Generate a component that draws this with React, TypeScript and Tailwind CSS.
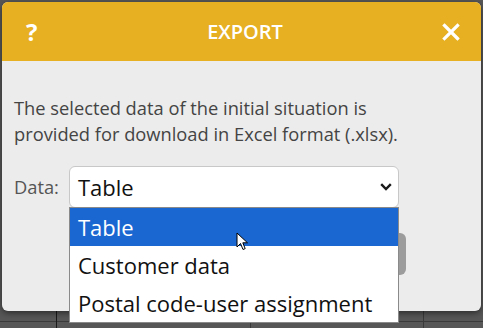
const options = ['Table', 'Customer data', 'Postal code-user assignment'];

export default function App() {
  return (
    <div
      className="relative w-[483px] h-[328px] overflow-hidden bg-[#575757] pt-[2px] pl-[2px]"
      style={{ fontFamily: '"Open Sans", "Noto Sans", sans-serif' }}
    >
      {/* background spreadsheet lines */}
      <div className="absolute left-0 right-0 top-[321px] h-px bg-[#3a3a3a]" />
      <div className="absolute top-[310px] bottom-0 left-[56px] w-px bg-[#1a1a1a]" />
      <div className="absolute top-[310px] bottom-0 left-[250px] w-px bg-[#3a3a3a]" />
      <div className="absolute top-[310px] bottom-0 left-[423px] w-px bg-[#3a3a3a]" />

      <div className="relative w-[479px] h-[309px] rounded-[6px] bg-[#ececec] shadow-[0_2px_6px_rgba(0,0,0,0.5)]">
        <div className="flex items-center h-[59px] pl-[24px] pr-[21px] rounded-t-[6px] bg-[#e6b022] text-white">
          <span className="w-[20px] text-[24px] font-bold leading-none">?</span>
          <span className="flex-1 text-center text-[20px] font-semibold pl-[2px]">EXPORT</span>
          <svg width="18" height="18" viewBox="0 0 18 18">
            <path d="M2.5 2.5 L15.5 15.5 M15.5 2.5 L2.5 15.5" stroke="white" strokeWidth="3.2" strokeLinecap="square" />
          </svg>
        </div>

        <div className="px-[12px] pt-[34px]">
          <p className="w-[400px] text-[18.3px] leading-[26px] text-[#444]">
            The selected data of the initial situation is provided for download in Excel format (.xlsx).
          </p>

          <div className="flex items-center mt-[19px]">
            <span className="w-[55px] text-[18.3px] text-[#555]">Data:</span>
            <div className="relative">
              <div className="flex items-center w-[330px] h-[42px] pl-[8px] pr-[6px] rounded-[6px] border border-[#c8c8c8] bg-white">
                <span className="flex-1 text-[22px] text-[#111]">Table</span>
                <svg width="12" height="8" viewBox="0 0 12 8">
                  <path d="M1.2 1.2 L6 6 L10.8 1.2" fill="none" stroke="#1a1a1a" strokeWidth="2.4" />
                </svg>
              </div>
              <div className="absolute z-10 left-0 top-[41px] w-[330px] border border-[#8a8a8a] bg-white">
                {options.map((o, i) => (
                  <div
                    key={o}
                    className={`h-[38px] flex items-center pl-[8px] text-[22px] ${
                      i === 0 ? 'bg-[#1a67d2] text-white' : 'text-[#111]'
                    }`}
                  >
                    {o}
                  </div>
                ))}
              </div>
            </div>
          </div>

          <div className="flex justify-end mt-[25px] pr-[63px]">
            <div className="w-[150px] h-[42px] rounded-[6px] bg-[#9c9c9c]" />
          </div>
        </div>
      </div>

      {/* mouse cursor */}
      <svg width="14" height="20" viewBox="0 0 14 20" className="absolute left-[236px] top-[232px] z-20">
        <path d="M1 1 L1 15 L4.5 11.5 L7 17.5 L9.2 16.6 L6.8 10.8 L11.5 10.8 Z" fill="white" stroke="black" strokeWidth="1" strokeLinejoin="round" />
      </svg>
    </div>
  );
}
